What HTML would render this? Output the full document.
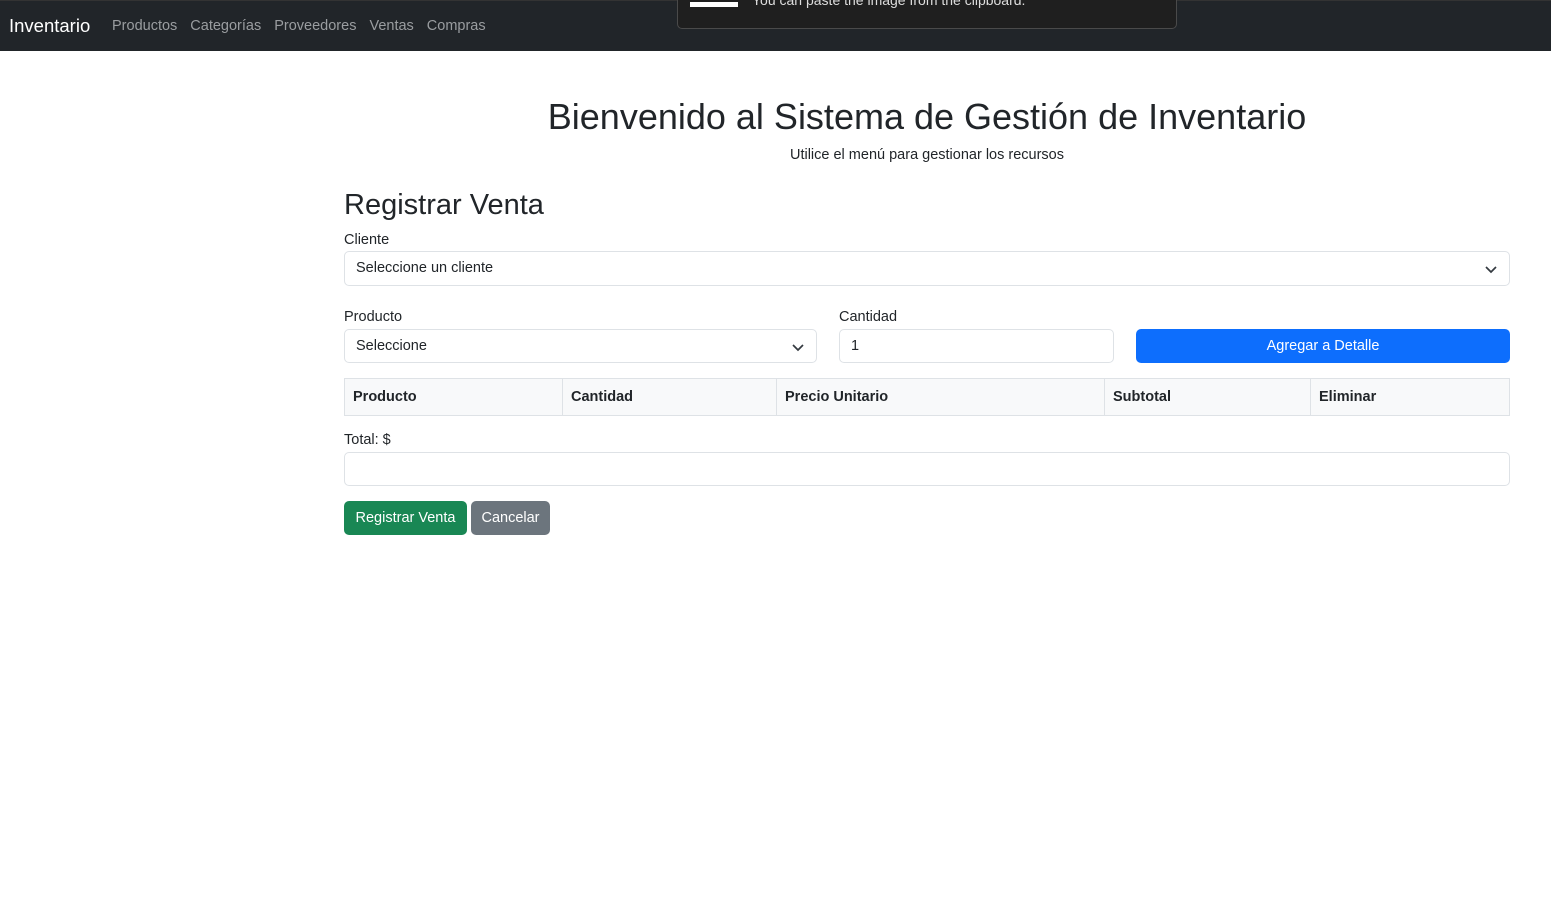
<!DOCTYPE html>
<html><head><meta charset="utf-8"><style>
*{box-sizing:border-box;margin:0;padding:0}
body{width:1551px;height:923px;background:#fff;font-family:"Liberation Sans",sans-serif;color:#212529;position:relative;overflow:hidden}
.nav{position:absolute;left:0;top:0;width:1551px;height:51px;background:#212529;border-top:1px solid #333}
.brand{position:absolute;left:9px;top:14px;font-size:18.5px;color:#fff}
.links{position:absolute;left:112px;top:17px;font-size:14.5px;color:#9a9da0}
.links span{margin-right:13px}
.pop{position:absolute;left:677px;top:-10px;width:500px;height:38px;background:#1f1f1f;border:1px solid #4a4a4a;border-radius:5px}
.pop .w{position:absolute;left:12px;top:10px;width:48px;height:5px;background:#fff}
.pop .t{position:absolute;left:74px;top:0px;color:#ddd;font-size:14px}
h1{position:absolute;left:0;width:1854px;text-align:center;top:96px;font-size:36px;font-weight:400}
.sub{position:absolute;left:0;width:1854px;text-align:center;top:147px;font-size:14.5px}
h2{position:absolute;left:344px;top:189px;font-size:29px;font-weight:400}
.lbl{position:absolute;font-size:14.5px}
.inp{position:absolute;border:1px solid #dee2e6;border-radius:5px;background:#fff;font-size:14.5px;padding:8px 11px}
.chev{position:absolute;right:12px;top:12px}
.btn{position:absolute;border-radius:5px;color:#fff;font-size:14.5px;text-align:center;line-height:34px}
table{position:absolute;left:344px;top:378px;width:1166px;border-collapse:collapse;font-size:14.5px;font-weight:700}
td{border:1px solid #dee2e6;background:#f8f9fa;height:37px;padding:0 8px}
</style></head><body>
<div class="nav"><div class="brand">Inventario</div>
<div class="links"><span>Productos</span><span>Categorías</span><span>Proveedores</span><span>Ventas</span><span>Compras</span></div>
<div class="pop"><div class="w"></div><div class="t">You can paste the image from the clipboard.</div></div></div>
<h1>Bienvenido al Sistema de Gestión de Inventario</h1>
<div class="sub">Utilice el menú para gestionar los recursos</div>
<h2>Registrar Venta</h2>
<div class="lbl" style="left:344px;top:232px">Cliente</div>
<div class="inp" style="left:344px;top:251px;width:1166px;height:35px">Seleccione un cliente<svg class="chev" width="12" height="10" viewBox="0 0 12 10"><path d="M1 3l5 5 5-5" fill="none" stroke="#343a40" stroke-width="1.7"/></svg></div>
<div class="lbl" style="left:344px;top:309px">Producto</div>
<div class="inp" style="left:344px;top:329px;width:473px;height:34px">Seleccione<svg class="chev" width="12" height="10" viewBox="0 0 12 10"><path d="M1 3l5 5 5-5" fill="none" stroke="#343a40" stroke-width="1.7"/></svg></div>
<div class="lbl" style="left:839px;top:309px">Cantidad</div>
<div class="inp" style="left:839px;top:329px;width:275px;height:34px">1</div>
<div class="btn" style="left:1136px;top:329px;width:374px;height:34px;background:#0d6efd">Agregar a Detalle</div>
<table><tr><td style="width:218px">Producto</td><td style="width:214px">Cantidad</td><td style="width:328px">Precio Unitario</td><td style="width:206px">Subtotal</td><td>Eliminar</td></tr></table>
<div class="lbl" style="left:344px;top:432px">Total: $</div>
<div class="inp" style="left:344px;top:452px;width:1166px;height:34px"></div>
<div class="btn" style="left:344px;top:501px;width:123px;height:34px;background:#198754">Registrar Venta</div>
<div class="btn" style="left:471px;top:501px;width:79px;height:34px;background:#6c757d">Cancelar</div>
</body></html>
